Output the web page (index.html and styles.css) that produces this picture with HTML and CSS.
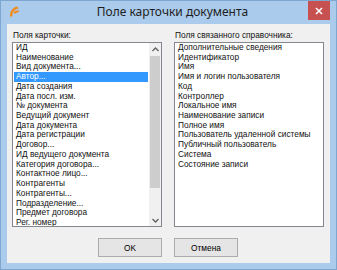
FILE: index.html
```html
<!DOCTYPE html>
<html lang="ru">
<head>
    <meta charset="UTF-8">
    <title>Поле карточки документа</title>
    <link rel="stylesheet" href="styles.css">
</head>
<body>
    <div class="window">
        <div class="titlebar">
            <svg class="app-icon" width="10" height="11" viewBox="0 0 10 11">
                <path d="M1 10.5 C0.5 6 3 1.5 8.5 0.5 L9.5 2.5 C5 3.5 3 6.5 3.5 10.5 Z" fill="#f28c1e"/>
                <path d="M4.5 6.5 C5.5 5 7.5 4.2 9.8 4.2 L9.8 6.3 C8 6.3 6.8 7 6 8 Z" fill="#f28c1e"/>
            </svg>
            <div class="title">Поле карточки документа</div>
            <div class="close">
                <svg width="8" height="8" viewBox="0 0 8 8">
                    <path d="M1 1 L7 7 M7 1 L1 7" stroke="#fff" stroke-width="1.6"/>
                </svg>
            </div>
        </div>
        <div class="client">
            <div class="column">
                <div class="label">Поля карточки:</div>
                <div class="listbox">
                    <div class="items">
                        <div>ИД</div>
                        <div>Наименование</div>
                        <div>Вид документа...</div>
                        <div class="selected">Автор...</div>
                        <div>Дата создания</div>
                        <div>Дата посл. изм.</div>
                        <div>№ документа</div>
                        <div>Ведущий документ</div>
                        <div>Дата документа</div>
                        <div>Дата регистрации</div>
                        <div>Договор...</div>
                        <div>ИД ведущего документа</div>
                        <div>Категория договора...</div>
                        <div>Контактное лицо...</div>
                        <div>Контрагенты</div>
                        <div>Контрагенты...</div>
                        <div>Подразделение...</div>
                        <div>Предмет договора</div>
                        <div>Рег. номер</div>
                    </div>
                    <div class="scrollbar">
                        <div class="arrow">
                            <svg width="7" height="5" viewBox="0 0 7 5"><path d="M0.5 4 L3.5 1 L6.5 4" fill="none" stroke="#606060" stroke-width="1.3"/></svg>
                        </div>
                        <div class="track"><div class="thumb"></div></div>
                        <div class="arrow">
                            <svg width="7" height="5" viewBox="0 0 7 5"><path d="M0.5 1 L3.5 4 L6.5 1" fill="none" stroke="#606060" stroke-width="1.3"/></svg>
                        </div>
                    </div>
                </div>
                <div class="buttons right">
                    <button>OK</button>
                </div>
            </div>
            <div class="column">
                <div class="label">Поля связанного справочника:</div>
                <div class="listbox">
                    <div class="items">
                        <div>Дополнительные сведения</div>
                        <div>Идентификатор</div>
                        <div>Имя</div>
                        <div>Имя и логин пользователя</div>
                        <div>Код</div>
                        <div>Контроллер</div>
                        <div>Локальное имя</div>
                        <div>Наименование записи</div>
                        <div>Полное имя</div>
                        <div>Пользователь удаленной системы</div>
                        <div>Публичный пользователь</div>
                        <div>Система</div>
                        <div>Состояние записи</div>
                    </div>
                </div>
                <div class="buttons">
                    <button>Отмена</button>
                </div>
            </div>
        </div>
    </div>
</body>
</html>
```

FILE: styles.css
```css
body {
    margin: 0;
    padding: 0;
    font-family: "Liberation Sans", Arial, sans-serif;
}
.window {
    width: 337px;
    height: 270px;
    box-sizing: border-box;
    background: #aacbeb;
    border: 1px solid #7ea7d0;
    padding: 0 6px 6px 6px;
    display: flex;
    flex-direction: column;
}
.titlebar {
    height: 23px;
    display: flex;
    align-items: center;
    position: relative;
}
.app-icon {
    margin: 0 0 2px 2px;
}
.title {
    flex: 1;
    text-align: center;
    font-family: "Noto Sans", sans-serif;
    font-size: 12px;
    color: #1e1e1e;
    padding-right: 4px;
    margin-top: -2px;
}
.close {
    position: absolute;
    right: 0;
    top: 0;
    width: 22px;
    height: 19px;
    background: #c75050;
    display: flex;
    align-items: center;
    justify-content: center;
}
.client {
    flex: 1;
    background: #f0f0f0;
    display: grid;
    grid-template-columns: 150px 150px;
    column-gap: 12px;
    padding: 5px 6px 0 5px;
    font-size: 8.3px;
    color: #111;
}
.column {
    display: flex;
    flex-direction: column;
}
.label {
    height: 13px;
    line-height: 12px;
    padding-left: 1px;
}
.listbox {
    height: 185px;
    box-sizing: border-box;
    border: 1px solid #828790;
    background: #fff;
    display: flex;
    overflow: hidden;
}
.items {
    flex: 1;
    padding: 0 1px;
}
.items div {
    height: 9.72px;
    line-height: 9.72px;
    padding-left: 2px;
    white-space: nowrap;
}
.items .selected {
    background: #3399ff;
    color: #fff;
}
.scrollbar {
    width: 12px;
    background: #f0f0f0;
    display: flex;
    flex-direction: column;
}
.arrow {
    height: 12px;
    display: flex;
    align-items: center;
    justify-content: center;
}
.track {
    flex: 1;
    padding: 1px 0 0 0;
}
.thumb {
    height: 132px;
    margin: 0 1px;
    background: #cdcdcd;
}
.buttons {
    display: flex;
    margin-top: 11px;
}
.buttons.right {
    justify-content: flex-end;
}
.buttons button {
    width: 64px;
    height: 19px;
    border: 1px solid #acacac;
    background: #e5e5e5;
    font-family: "Liberation Sans", Arial, sans-serif;
    font-size: 8.3px;
    color: #000;
    padding: 0;
}
```
